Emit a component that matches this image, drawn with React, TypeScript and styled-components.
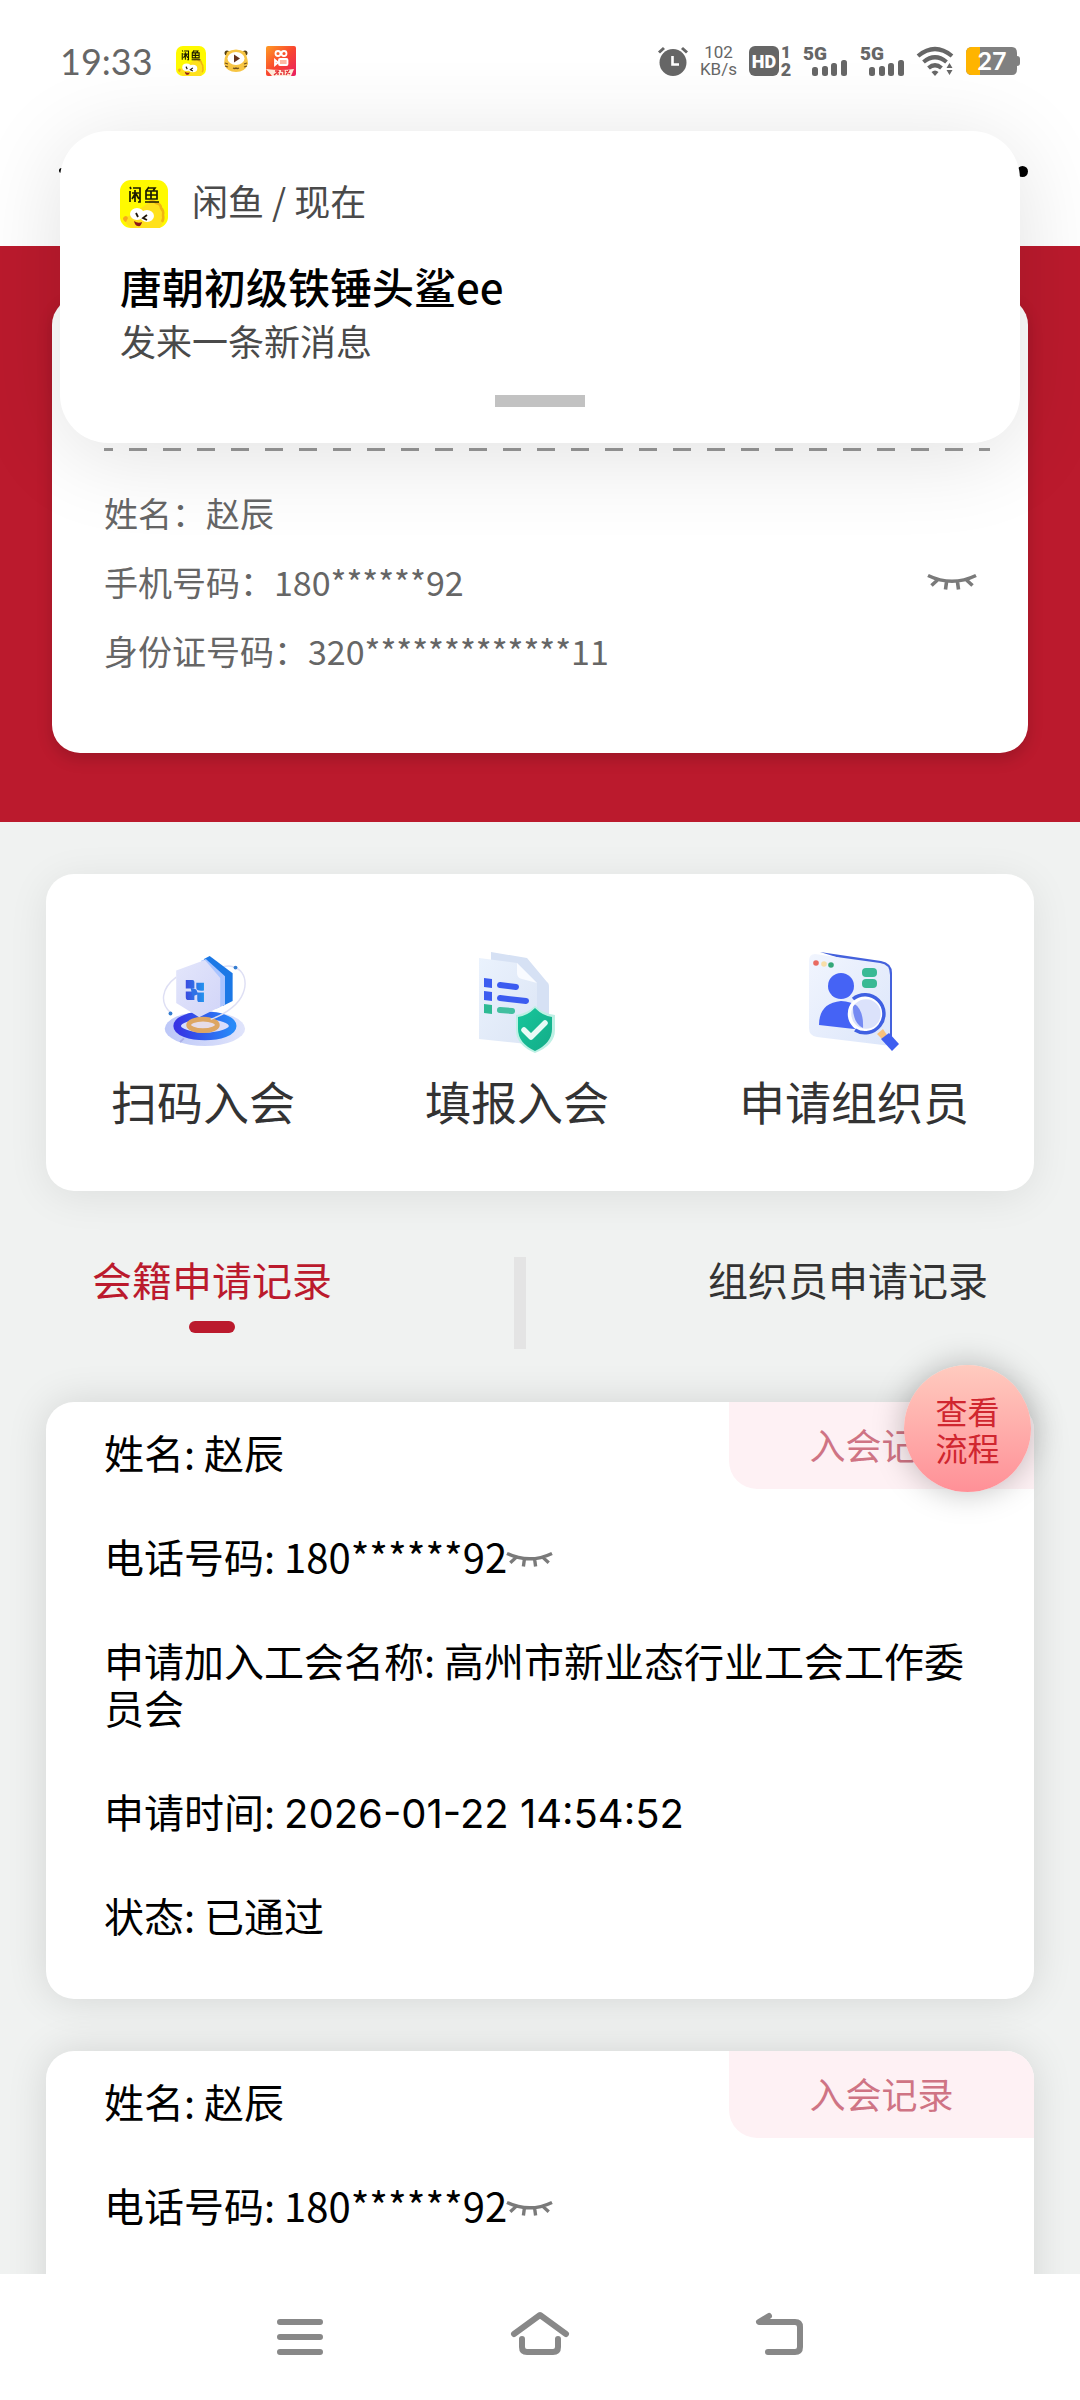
import React from 'react';
import styled, { createGlobalStyle } from 'styled-components';

const Global = createGlobalStyle`
  * { box-sizing: border-box; }
  html, body { margin: 0; padding: 0; }
  body {
    background: #f0f2f1;
    color: #000;
    font-family: "Noto Sans CJK SC", "Noto Sans", sans-serif;
  }
  button, h2, p, dl, dt, dd { margin: 0; padding: 0; font: inherit; }
  button { border: 0; background: none; color: inherit; cursor: pointer; }
  svg { display: block; flex: none; overflow: visible; }
`;

const Screen = styled.div`
  position: relative;
  height: 100vh;
  display: flex;
  flex-direction: column;
  overflow: hidden;
`;

const TopBar = styled.header`
  flex: none;
  height: 246px;
  background: #fff;
`;

const StatusBar = styled.div`
  position: absolute;
  z-index: 6;
  top: 0;
  left: 0;
  right: 0;
  height: 122px;
  padding: 0 60px;
  display: flex;
  align-items: center;
  justify-content: space-between;
  color: #666;
`;

const StatusGroup = styled.div<{ $gap: number }>`
  display: flex;
  align-items: center;
  gap: ${(p) => p.$gap}px;
`;

const Clock = styled.time`
  margin-right: 8px;
  font-family: Lato, sans-serif;
  font-size: 36px;
  line-height: 40px;
`;

const Speed = styled.div`
  font-family: Roboto, sans-serif;
  font-size: 17px;
  line-height: 17px;
  text-align: center;
`;

const MoreDot = styled.span`
  position: absolute;
  top: 166px;
  right: 52px;
  width: 11px;
  height: 11px;
  border-radius: 50%;
  background: #000;
`;

const BackTip = styled(MoreDot)`
  right: auto;
  left: 59px;
  top: 168px;
  width: 5px;
  height: 5px;
`;

const Notice = styled.aside`
  position: absolute;
  z-index: 5;
  top: 131px;
  left: 60px;
  right: 60px;
  height: 312px;
  padding: 49px 60px 0;
  border-radius: 48px;
  background: #fff;
  box-shadow: 0 12px 90px rgba(0, 0, 0, 0.12);
`;

const NoticeSource = styled.div`
  display: flex;
  align-items: flex-start;
  gap: 24px;
  color: #4a4a4a;
  font-size: 36px;
  line-height: 40px;
`;

const NoticeTitle = styled.h2`
  margin-top: 30px;
  font-size: 42px;
  line-height: 56px;
  font-weight: 500;
`;

const NoticeText = styled.p`
  color: #4a4a4a;
  font-size: 36px;
  line-height: 52px;
`;

const Handle = styled.span`
  position: absolute;
  left: 50%;
  bottom: 36px;
  width: 90px;
  height: 12px;
  margin-left: -45px;
  background: #c2c2c2;
`;

const Content = styled.main`
  flex: 1;
  min-height: 0;
  overflow: hidden;
`;

const Hero = styled.section`
  padding: 51px 52px 69px;
  background: #bb1a2d;
`;

const ProfileCard = styled.div`
  height: 456px;
  padding: 151px 38px 0 52px;
  border-radius: 28px;
  background: #fff;
  box-shadow: 0 6px 16px rgba(0, 0, 0, 0.16);
`;

const DashRule = styled.div`
  height: 3px;
  background: repeating-linear-gradient(90deg, #999 0 9px, transparent 9px 25px, #999 25px 34px);
`;

const ProfileList = styled.dl`
  margin-top: 27px;
  color: #666;
  font-size: 34px;
`;

const ProfileRow = styled.div`
  display: flex;
  align-items: center;
  height: 69px;
  padding-right: 14px;
`;

const EyeButton = styled.button`
  display: inline-flex;
`;

const ProfileEye = styled(EyeButton)`
  margin-left: auto;
`;

const Body = styled.div`
  padding: 52px 46px;
  display: flex;
  flex-direction: column;
`;

const Services = styled.nav`
  height: 317px;
  padding: 79px 0 0;
  display: flex;
  align-items: flex-start;
  justify-content: space-around;
  border-radius: 28px;
  background: #fff;
  box-shadow: 0 6px 40px rgba(0, 0, 0, 0.08);
`;

const Service = styled.button`
  display: flex;
  flex-direction: column;
  align-items: center;
  gap: 17px;
  color: #333;
  font-size: 46px;
  line-height: 64px;
`;

const Tabs = styled.div`
  height: 211px;
  padding: 66px 46px 0;
  display: flex;
  align-items: flex-start;
  justify-content: space-between;
`;

const Tab = styled.button<{ $on?: boolean }>`
  display: flex;
  flex-direction: column;
  align-items: center;
  gap: 20px;
  color: ${(p) => (p.$on ? '#bb1a2d' : '#333')};
  font-size: 40px;
  line-height: 44px;

  &::after {
    content: "";
    width: 46px;
    height: 12px;
    border-radius: 6px;
    background: ${(p) => (p.$on ? '#bb1a2d' : 'transparent')};
  }
`;

const TabDivider = styled.span`
  width: 12px;
  height: 92px;
  background: #e4e4e4;
`;

const Records = styled.div`
  display: flex;
  flex-direction: column;
  gap: 52px;
`;

const Record = styled.article`
  position: relative;
  padding: 27px 58px 60px;
  border-radius: 28px;
  background: #fff;
  box-shadow: 0 0 40px rgba(0, 0, 0, 0.12);
`;

const RecordTag = styled.span`
  position: absolute;
  top: 0;
  right: 0;
  width: 305px;
  padding-bottom: 2px;
  border-radius: 0 28px 0 28px;
  background: #fef1f4;
  color: #cf7484;
  font-size: 36px;
  line-height: 85px;
  text-align: center;
`;

const RecordList = styled.dl`
  display: flex;
  flex-direction: column;
  gap: 57px;
  font-size: 40px;
  line-height: 47px;
`;

const RecordRow = styled.div`
  dt, dd { display: inline; }
  dt::after { content: " "; white-space: pre; }
  button { vertical-align: 6px; }
`;

const Stamp = styled.time`
  font-family: Inter, sans-serif;
  line-height: 1;
`;

const FlowButton = styled.button`
  position: absolute;
  z-index: 3;
  top: 1365px;
  right: 49px;
  width: 127px;
  height: 127px;
  border-radius: 50%;
  background: linear-gradient(#ffcbbf, #ff9097);
  box-shadow: 0 0 32px rgba(0, 0, 0, 0.26);
  color: #d0262f;
  font-size: 32px;
  line-height: 37px;
  text-align: center;
`;

const SystemNav = styled.footer`
  position: relative;
  z-index: 4;
  flex: none;
  height: 126px;
  display: flex;
  align-items: center;
  justify-content: center;
  gap: 180px;
  background: #fff;
`;

const NavButton = styled.button`
  width: 60px;
  height: 60px;
`;

function FishIcon({ size }: { size: number }) {
  return (
    <svg width={size} height={size} viewBox="0 0 48 48" aria-hidden="true">
      <rect width="48" height="48" rx="11" fill="#fffa00" />
      <path d="M5 41q0-5 4-5c6-7 12-6 20-14 9-1 14 6 14 16q0 6-3 10H13q-6-1-8-7z" fill="#ffe11c" />
      <path d="M29 22q5-2 7 1 5 1 5 5 3 3 2 7 1 4-1 7" fill="none" stroke="#f0b512" strokeWidth="2.500" />
      <path d="M3 38q3-4 5 0l-2 4q-3-1-3-4z" fill="#f5a91c" />
      <ellipse cx="17" cy="34" rx="7" ry="6" fill="#fff" />
      <ellipse cx="27" cy="36" rx="7" ry="6" fill="#fff" />
      <path d="M16 33l2 4M27 35l-4 3 4 2" fill="none" stroke="#20150a" strokeWidth="1.800" />
      <path d="M14 41q4 3 8 1-1 5-4 4-3 0-4-5z" fill="#8e1719" />
      <path d="M10 11v11M10 7l1 2M13 8h7v14h-2M12 13h7M15 10v12M15 14l-3 5M16 14l3 5" fill="none" stroke="#1b1b00" strokeWidth="1.700" />
      <path d="M29 7l-3 4M28 8h7l-2 3M26 11h11v8H26zM26 15h11M31 11v8M25 22h14" fill="none" stroke="#1b1b00" strokeWidth="1.700" />
    </svg>
  );
}

function TigerIcon() {
  return (
    <svg width="30" height="30" viewBox="0 0 30 30" aria-hidden="true">
      <circle cx="6" cy="7" r="2.500" fill="#554014" />
      <circle cx="24" cy="7" r="2.500" fill="#554014" />
      <path d="M6 6q9-5 18 0 3 7 3 12-3 8-12 8T3 18Q3 12 6 6z" fill="#f7c544" />
      <ellipse cx="15" cy="12.500" rx="8.500" ry="6.500" fill="#fff" />
      <path d="M13 8.500l6 4-6 4z" fill="#65331f" />
      <path d="M4 17l3 1M4 20l3 1M26 17l-3 1M26 20l-3 1M12 22q2 1 3 0 1 1 3 0" fill="none" stroke="#72501a" strokeWidth="1.300" />
    </svg>
  );
}

function CameraIcon() {
  return (
    <svg width="30" height="30" viewBox="0 0 30 30" aria-hidden="true">
      <defs>
        <linearGradient id="cam" x1="0" y1="0" x2="1" y2="1">
          <stop offset="0" stopColor="#ff9b23" />
          <stop offset=".5" stopColor="#f9462f" />
          <stop offset="1" stopColor="#e91e62" />
        </linearGradient>
      </defs>
      <rect width="30" height="30" rx="2" fill="url(#cam)" />
      <g fill="none" stroke="#fff" strokeWidth="1.800">
        <circle cx="12" cy="7.500" r="2.500" />
        <circle cx="18" cy="7.500" r="2.500" />
        <rect x="13" y="13" width="8.500" height="6" rx="1" fill="#ffb9a4" />
        <path d="M9 14v5l3-2.500z" />
      </g>
      <path d="M0 23q8 1 15 1t13-1l-3 7H6z" fill="#ffe9d8" />
      <path d="M9 25h3v4M8 29l5-4M15 25h3v4M14 28h2M20 25l4 3M23 24l-3 5" stroke="#e33136" strokeWidth="1.400" fill="none" />
    </svg>
  );
}

function AlarmIcon() {
  return (
    <svg width="30" height="30" viewBox="0 0 30 30" aria-hidden="true">
      <circle cx="15" cy="16.500" r="13.500" fill="#666" />
      <path d="M1 6.500l5-4.500M29 6.500L24 2" stroke="#666" strokeWidth="3" />
      <path d="M14.500 10v8.500H21" fill="none" stroke="#fff" strokeWidth="2.600" />
    </svg>
  );
}

function HdIcon() {
  return (
    <svg width="42" height="30" viewBox="0 0 42 30" fontFamily="Roboto, sans-serif" fontWeight="900" aria-hidden="true">
      <rect width="30" height="30" rx="6" fill="#666" />
      <text x="15" y="22" fontSize="18" textAnchor="middle" fill="#fff">HD</text>
      <text x="37" y="12" fontSize="17" textAnchor="middle" fill="#666">1</text>
      <text x="37" y="30" fontSize="18" textAnchor="middle" fill="#666">2</text>
    </svg>
  );
}

function SignalIcon() {
  return (
    <svg width="45" height="30" viewBox="0 0 45 30" fill="#666" aria-hidden="true">
      <text x="0" y="14" fontSize="19" fontFamily="Roboto, sans-serif" fontWeight="900">5G</text>
      <rect x="9" y="21" width="6" height="9" rx="2.500" />
      <rect x="19" y="20" width="6" height="10" rx="2.500" />
      <rect x="28" y="17" width="6" height="13" rx="2.500" />
      <rect x="38" y="14" width="6" height="16" rx="2.500" />
    </svg>
  );
}

function WifiIcon() {
  return (
    <svg width="37" height="30" viewBox="0 0 37 30" aria-hidden="true">
      <g fill="none" stroke="#666" strokeWidth="4.200">
        <path d="M1 10Q18 -4 35 10" />
        <path d="M6.500 16Q18 6.500 29.500 16" />
        <path d="M11.500 22Q18 16.500 24.500 22" />
      </g>
      <path d="M14.500 26q3.500-3 7 0L18 30zM29.500 22l3-5 3 5zM29.500 24l3 5 3-5z" fill="#666" />
    </svg>
  );
}

function BatteryIcon() {
  return (
    <svg width="54" height="28" viewBox="0 0 54 28" aria-hidden="true">
      <path d="M6 0h40q5 0 5 6v3q3 0 3 3v4q0 3-3 3v3q0 6-5 6H6q-6 0-6-6V6q0-6 6-6z" fill="#808080" />
      <path d="M14 0H6Q0 0 0 6v16q0 6 6 6h8z" fill="#ffb400" />
      <text x="26" y="23" fontSize="25" fontFamily="Lato, sans-serif" fontWeight="700" textAnchor="middle" fill="#fff">27</text>
    </svg>
  );
}

function ClosedEye({ width }: { width: number }) {
  return (
    <svg width={width} height={width / 3} viewBox="0 0 48 16" fill="none" stroke="#7a7a7a" strokeWidth="3.600" aria-hidden="true">
      <path d="M0 1.500Q24 13 48 1.500M9.500 6L3.500 11.500M18.500 8L17.500 15.500M29.500 8L30.500 15.500M38.500 6L44.500 11.500" />
    </svg>
  );
}

function PlatformArt() {
  return (
    <svg width="88" height="98" viewBox="0 0 92 98" aria-hidden="true">
      <defs>
        <linearGradient id="ring" x1="0" x2="1">
          <stop offset="0" stopColor="#3734e4" />
          <stop offset="1" stopColor="#288af8" />
        </linearGradient>
        <linearGradient id="face" x1="0" x2="1" y2="1">
          <stop offset="0" stopColor="#e3e6fb" />
          <stop offset="1" stopColor="#d2d5f8" />
        </linearGradient>
        <linearGradient id="disc" x1="0" x2="1">
          <stop offset="0" stopColor="#bcc7f8" />
          <stop offset="1" stopColor="#e0e4fb" />
        </linearGradient>
        <linearGradient id="tiles" x1="0" x2="1">
          <stop offset="0" stopColor="#3b4be0" />
          <stop offset="1" stopColor="#2494ed" />
        </linearGradient>
      </defs>
      <ellipse cx="48" cy="77" rx="42" ry="18" fill="url(#disc)" />
      <ellipse cx="48" cy="74" rx="29" ry="11" fill="#d9ddfb" stroke="url(#ring)" strokeWidth="8" />
      <ellipse cx="46" cy="73" rx="15" ry="6" fill="#e6dce8" stroke="#dda662" strokeWidth="5" />
      <path d="M18 23C2 35 1 50 12 60M64 13C84 6 97 24 86 44 80 55 64 64 54 67" fill="none" stroke="#dedff4" strokeWidth="1.500" />
      <path d="M47 4l6-3 24 18v29l-10 5-20-28z" fill="#1b78e6" />
      <path d="M44 6l5-2 20 18v30l-9 4z" fill="#a9c4ff" />
      <path d="M18 16L48 5 64 24V54L42 65 18 50z" fill="url(#face)" />
      <path d="M28 26h7q2 0 2 2v7h-9zM39 29h8v8q-8 1-8-3zM28 38h7q2 0 2 3v6h-6q-3 0-3-3zM40 39h7v10h-5q-2 0-2-3z" fill="url(#tiles)" />
      <path d="M33 34l6 2 2 5-6 2z" fill="#2f71e6" />
      <circle cx="80" cy="13" r="2" fill="#347dd1" />
      <circle cx="12" cy="61" r="2" fill="#347dd1" />
      <path d="M22 91l4-4" stroke="#aaafe8" strokeWidth="2" />
    </svg>
  );
}

function DocumentArt() {
  return (
    <svg width="88" height="98" viewBox="0 0 88 98" aria-hidden="true">
      <defs>
        <linearGradient id="paper" x1="0" y1="0" x2="1" y2="1">
          <stop offset="0" stopColor="#eaf2fd" />
          <stop offset="1" stopColor="#dce5f5" />
        </linearGradient>
        <linearGradient id="shield" x1="0" y1="0" x2="1" y2="1">
          <stop offset="0" stopColor="#16c69b" />
          <stop offset="1" stopColor="#14ac88" />
        </linearGradient>
      </defs>
      <path d="M18 -1l36 6 20 24q2 1 2 5v46L18 76z" fill="#d6e1f4" />
      <path d="M6 5l38 5 20 20v62L6 86z" fill="url(#paper)" />
      <path d="M44 10v10q0 5 5 6l15 4z" fill="#f9fbff" />
      <path d="M11 25l8 1v9l-8-1zM11 38l8 1v9l-8-1z" fill="#3c5cf0" />
      <path d="M11 51l8 1v9l-8-1z" fill="#2eba94" />
      <path d="M27 32l16 2M27 45l26 3" stroke="#3c5cf0" strokeWidth="6" strokeLinecap="round" />
      <path d="M27 57l12 1" stroke="#42bfa0" strokeWidth="6" strokeLinecap="round" />
      <path d="M62 53q9 8 20 9v15q0 15-20 23-19-8-19-23V62q10-1 19-9z" fill="#bdf0e4" />
      <path d="M62 55q8 8 17 9v12q0 14-17 22-17-8-17-22V64q9-1 17-9z" fill="url(#shield)" />
      <path d="M51 77l7 7 14-14" fill="none" stroke="#e8fbf6" strokeWidth="5.500" strokeLinecap="round" strokeLinejoin="round" />
    </svg>
  );
}

function OrganizerArt() {
  return (
    <svg width="92" height="98" viewBox="0 0 92 98" aria-hidden="true">
      <defs>
        <linearGradient id="panel" x1="0" y1="0" x2="1" y2="1">
          <stop offset="0" stopColor="#f1f5fe" />
          <stop offset="1" stopColor="#dce6fa" />
        </linearGradient>
      </defs>
      <path d="M12 -1l61 9q11 2 11 12v66H74V18z" fill="#4461dc" />
      <path d="M7 1l65 9q10 1 10 12v67q0 4-7 3L9 84q-8-1-8-9V8q0-7 6-7z" fill="url(#panel)" />
      <circle cx="8" cy="10" r="2.800" fill="#e96a60" />
      <circle cx="16" cy="11" r="2.800" fill="#f8dea8" />
      <circle cx="23" cy="12" r="2.800" fill="#34a778" />
      <rect x="54" y="15" width="15" height="9" rx="4" fill="#39b994" />
      <rect x="54" y="26" width="15" height="9" rx="4" fill="#39b994" />
      <circle cx="33" cy="33" r="13" fill="#4563f5" />
      <path d="M11 72q0-22 22-24 21 1 22 18v11z" fill="#4563f5" />
      <circle cx="58" cy="61" r="17" fill="#dbe2fb" />
      <path d="M45 50q11 6 10 25-11-5-10-25z" fill="#758af2" />
      <circle cx="58" cy="61" r="16.500" fill="none" stroke="#fff" strokeWidth="3.500" />
      <path d="M45 46a19 19 0 1 1 2 31" fill="none" stroke="#3f60e2" strokeWidth="3.500" />
      <path d="M69 81l6-5 4 6-5 4z" fill="#f8c27e" />
      <path d="M73 86l8-6 10 11-7 7z" fill="#3f5ff0" />
    </svg>
  );
}

const navStroke = {
  width: 60,
  height: 60,
  viewBox: '0 0 60 60',
  fill: 'none',
  stroke: '#888',
  strokeWidth: 6,
  strokeLinecap: 'round' as const,
  strokeLinejoin: 'round' as const,
  'aria-hidden': true,
};

const services = [
  { label: '扫码入会', art: <PlatformArt /> },
  { label: '填报入会', art: <DocumentArt /> },
  { label: '申请组织员', art: <OrganizerArt /> },
];

const record = {
  name: '赵辰',
  phone: '180******92',
  union: '高州市新业态行业工会工作委员会',
  time: '2026-01-22 14:54:52',
  state: '已通过',
};

const records = [record, record];

export default function App() {
  return (
    <Screen>
      <Global />
      <StatusBar>
        <StatusGroup $gap={15}>
          <Clock>19:33</Clock>
          <FishIcon size={30} />
          <TigerIcon />
          <CameraIcon />
        </StatusGroup>
        <StatusGroup $gap={12}>
          <AlarmIcon />
          <Speed>102<br />KB/s</Speed>
          <HdIcon />
          <SignalIcon />
          <SignalIcon />
          <WifiIcon />
          <BatteryIcon />
        </StatusGroup>
      </StatusBar>
      <TopBar>
        <BackTip />
        <MoreDot />
      </TopBar>

      <Notice>
        <NoticeSource>
          <FishIcon size={48} />
          <span>闲鱼 / 现在</span>
        </NoticeSource>
        <NoticeTitle>唐朝初级铁锤头鲨ee</NoticeTitle>
        <NoticeText>发来一条新消息</NoticeText>
        <Handle />
      </Notice>

      <Content>
        <Hero>
          <ProfileCard>
            <DashRule />
            <ProfileList>
              <ProfileRow><dt>姓名：</dt><dd>赵辰</dd></ProfileRow>
              <ProfileRow>
                <dt>手机号码：</dt><dd>180******92</dd>
                <ProfileEye aria-label="显示信息"><ClosedEye width={48} /></ProfileEye>
              </ProfileRow>
              <ProfileRow><dt>身份证号码：</dt><dd>320*************11</dd></ProfileRow>
            </ProfileList>
          </ProfileCard>
        </Hero>

        <Body>
          <Services>
            {services.map((s) => (
              <Service key={s.label}>
                {s.art}
                <span>{s.label}</span>
              </Service>
            ))}
          </Services>
          <Tabs>
            <Tab $on>会籍申请记录</Tab>
            <TabDivider />
            <Tab>组织员申请记录</Tab>
          </Tabs>
          <Records>
            {records.map((r, i) => (
              <Record key={i}>
                <RecordTag>入会记录</RecordTag>
                <RecordList>
                  <RecordRow><dt>姓名:</dt><dd>{r.name}</dd></RecordRow>
                  <RecordRow>
                    <dt>电话号码:</dt>
                    <dd>{r.phone}<EyeButton aria-label="显示号码"><ClosedEye width={45} /></EyeButton></dd>
                  </RecordRow>
                  <RecordRow><dt>申请加入工会名称:</dt><dd>{r.union}</dd></RecordRow>
                  <RecordRow><dt>申请时间:</dt><dd><Stamp>{r.time}</Stamp></dd></RecordRow>
                  <RecordRow><dt>状态:</dt><dd>{r.state}</dd></RecordRow>
                </RecordList>
              </Record>
            ))}
          </Records>
        </Body>
      </Content>

      <FlowButton>查看<br />流程</FlowButton>

      <SystemNav>
        <NavButton aria-label="菜单">
          <svg {...navStroke}><path d="M10 15h40M10 30h40M10 45h40" /></svg>
        </NavButton>
        <NavButton aria-label="主页">
          <svg {...navStroke}><path d="M4 27L30 8l26 19M12 32v8q0 5 5 5h26q5 0 5-5v-8" /></svg>
        </NavButton>
        <NavButton aria-label="返回">
          <svg {...navStroke}><path d="M19 9L9 15h36q5 0 5 5v20q0 5-5 5H18" /></svg>
        </NavButton>
      </SystemNav>
    </Screen>
  );
}
